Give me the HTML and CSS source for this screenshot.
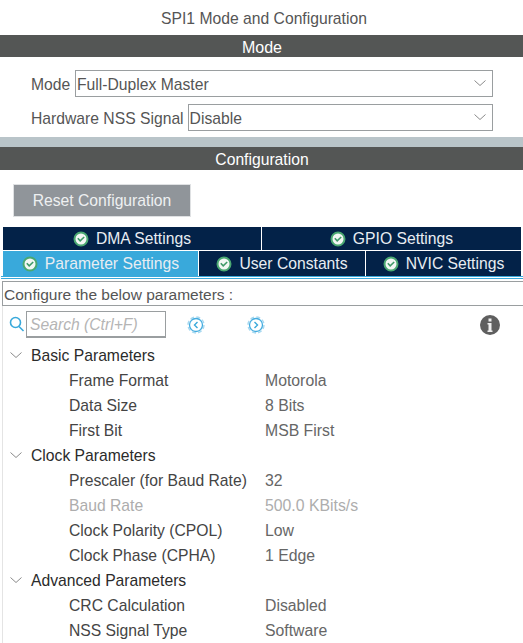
FILE: index.html
```html
<!DOCTYPE html>
<html lang="en">

<head>
    <title>SPI1 Mode and Configuration</title>

    <link rel="stylesheet" href="styles.css">
</head>

<body>
    <div class="page-title">SPI1 Mode and Configuration</div>

    <div class="band">Mode</div>
    <div class="mode-panel">
        <div class="mode-row">
            <label class="mode-label mode-label--short">Mode</label>
            <div class="select">
                <span>Full-Duplex Master</span>
                <svg class="select__arrow" width="12" height="7" viewBox="0 0 12 7"><path d="M0.5 0.5 L6 5.5 L11.5 0.5" /></svg>
            </div>
        </div>
        <div class="mode-row">
            <label class="mode-label">Hardware NSS Signal</label>
            <div class="select">
                <span>Disable</span>
                <svg class="select__arrow" width="12" height="7" viewBox="0 0 12 7"><path d="M0.5 0.5 L6 5.5 L11.5 0.5" /></svg>
            </div>
        </div>
    </div>
    <div class="divider"></div>

    <div class="band band--config">Configuration</div>
    <div class="reset-wrap">
        <button class="reset-button">Reset Configuration</button>
    </div>

    <div class="tabs">
        <div class="tabs__row">
            <div class="tab tab--dma">
                <svg class="check" width="16" height="16" viewBox="0 0 16 16"><circle cx="8" cy="8" r="6.5" /><path d="M4.8 7.2 L7.2 9.8 L11.2 6" /></svg>
                DMA Settings
            </div>
            <div class="tab tab--gpio">
                <svg class="check" width="16" height="16" viewBox="0 0 16 16"><circle cx="8" cy="8" r="6.5" /><path d="M4.8 7.2 L7.2 9.8 L11.2 6" /></svg>
                GPIO Settings
            </div>
        </div>
        <div class="tabs__row">
            <div class="tab tab--param tab--active">
                <svg class="check" width="16" height="16" viewBox="0 0 16 16"><circle cx="8" cy="8" r="6.5" /><path d="M4.8 7.2 L7.2 9.8 L11.2 6" /></svg>
                Parameter Settings
            </div>
            <div class="tab tab--user">
                <svg class="check" width="16" height="16" viewBox="0 0 16 16"><circle cx="8" cy="8" r="6.5" /><path d="M4.8 7.2 L7.2 9.8 L11.2 6" /></svg>
                User Constants
            </div>
            <div class="tab tab--nvic">
                <svg class="check" width="16" height="16" viewBox="0 0 16 16"><circle cx="8" cy="8" r="6.5" /><path d="M4.8 7.2 L7.2 9.8 L11.2 6" /></svg>
                NVIC Settings
            </div>
        </div>
    </div>
    <div class="tabs-line"></div>

    <div class="params">
        <div class="params__caption">Configure the below parameters :</div>

        <div class="search-row">
            <svg class="search-icon" width="16" height="17" viewBox="0 0 16 17"><circle cx="6.5" cy="6.5" r="5" /><path d="M10 10.5 L14.5 15" /></svg>
            <div class="search-box">Search (Ctrl+F)</div>
            <svg class="nav-icon nav-icon--prev" width="18" height="18" viewBox="0 0 18 18"><circle class="nav-icon__halo" cx="9" cy="9" r="8" /><circle cx="9" cy="9" r="6.5" /><path class="nav-icon__arrow" d="M10.5 6 L7.5 9 L10.5 12" /></svg>
            <svg class="nav-icon nav-icon--next" width="18" height="18" viewBox="0 0 18 18"><circle class="nav-icon__halo" cx="9" cy="9" r="8" /><circle cx="9" cy="9" r="6.5" /><path class="nav-icon__arrow" d="M7.5 6 L10.5 9 L7.5 12" /></svg>
            <svg class="info-icon" width="20" height="20" viewBox="0 0 20 20"><circle cx="10" cy="10" r="10" /><rect x="8.5" y="3.5" width="3" height="3" /><path d="M7.5 8 H11.5 V15.5 H12.5 V17 H7.5 V15.5 H8.5 V9.5 H7.5 Z" /></svg>
        </div>

        <div class="tree">
            <div class="tree__group">
                <svg class="tree__arrow" width="12" height="7" viewBox="0 0 12 7"><path d="M0.5 0.5 L6 5.5 L11.5 0.5" /></svg>
                Basic Parameters
            </div>
            <div class="tree__row"><span class="tree__name">Frame Format</span><span class="tree__value">Motorola</span></div>
            <div class="tree__row"><span class="tree__name">Data Size</span><span class="tree__value">8 Bits</span></div>
            <div class="tree__row"><span class="tree__name">First Bit</span><span class="tree__value">MSB First</span></div>

            <div class="tree__group">
                <svg class="tree__arrow" width="12" height="7" viewBox="0 0 12 7"><path d="M0.5 0.5 L6 5.5 L11.5 0.5" /></svg>
                Clock Parameters
            </div>
            <div class="tree__row"><span class="tree__name">Prescaler (for Baud Rate)</span><span class="tree__value">32</span></div>
            <div class="tree__row tree__row--disabled"><span class="tree__name">Baud Rate</span><span class="tree__value">500.0 KBits/s</span></div>
            <div class="tree__row"><span class="tree__name">Clock Polarity (CPOL)</span><span class="tree__value">Low</span></div>
            <div class="tree__row"><span class="tree__name">Clock Phase (CPHA)</span><span class="tree__value">1 Edge</span></div>

            <div class="tree__group">
                <svg class="tree__arrow" width="12" height="7" viewBox="0 0 12 7"><path d="M0.5 0.5 L6 5.5 L11.5 0.5" /></svg>
                Advanced Parameters
            </div>
            <div class="tree__row"><span class="tree__name">CRC Calculation</span><span class="tree__value">Disabled</span></div>
            <div class="tree__row"><span class="tree__name">NSS Signal Type</span><span class="tree__value">Software</span></div>
        </div>
    </div>
</body>

</html>
```

FILE: styles.css
```css
* {
    padding: 0;
    margin: 0;
    box-sizing: border-box;
}

html,
body {
    height: 643px;
    overflow: hidden;
}

body {
    background: white;
    color: #555;
    font-family: "Liberation Sans", Arial, sans-serif;
    font-size: 15.7px;
}

.page-title {
    height: 35px;
    line-height: 37px;
    text-align: center;
    padding-left: 5px;
}

.band {
    height: 22px;
    line-height: 25px;
    background: #545655;
    color: white;
    text-align: center;
    padding-left: 1px;
    font-size: 16px;
}

.band--config {
    height: 23px;
    font-size: 15.7px;
}

.mode-panel {
    display: flex;
    flex-direction: column;
    gap: 7px;
    height: 80px;
    padding: 13px 30px 0 31px;
}

.mode-row {
    display: flex;
    align-items: center;
    gap: 4px;
    height: 27px;
}

.mode-label {
    white-space: nowrap;
    padding-top: 2px;
}

.mode-label--short {
    width: 40px;
}

.select {
    flex: 1;
    height: 27px;
    display: flex;
    align-items: center;
    justify-content: space-between;
    padding: 0 6px 0 1px;
    border: 1px solid #9a9ea0;
}

.select span {
    padding-top: 2px;
}

.select__arrow path,
.tree__arrow path {
    fill: none;
    stroke: #8a8a8a;
    stroke-width: 1;
}

.divider {
    height: 10px;
    background: #b9c4c9;
}

.reset-wrap {
    padding: 14px 0 0 13px;
    height: 57px;
}

.reset-button {
    display: block;
    width: 178px;
    height: 33px;
    background: #90959a;
    border: 1px solid #dfe1e3;
    color: #eef0f1;
    font-family: inherit;
    font-size: 15.7px;
}

.tabs {
    margin: 0 2px 0 3px;
    display: flex;
    flex-direction: column;
    gap: 1px;
}

.tabs__row {
    display: flex;
    height: 23px;
    gap: 1px;
    background: white;
}

.tabs__row + .tabs__row {
    height: 25px;
}

.tab {
    display: flex;
    align-items: center;
    justify-content: center;
    gap: 7px;
    background: #032248;
    color: #e8edf2;
}

.tab--dma {
    width: 258px;
}

.tab--gpio {
    flex: 1;
}

.tab--param {
    width: 195px;
}

.tab--user {
    width: 166px;
}

.tab--nvic {
    flex: 1;
}

.tab--active {
    background: #39a9db;
}

.check circle {
    fill: #f2f7f4;
    stroke: #4aa872;
    stroke-width: 2;
}

.check path {
    fill: none;
    stroke: #3f9a68;
    stroke-width: 1.6;
}

.tabs-line {
    margin-left: 1px;
    height: 3px;
    border-top: 1px solid #39a9db;
    border-bottom: 1px solid #39a9db;
}

.params {
    margin-left: 2px;
    border-left: 1px solid #e4e4e4;
}

.params__caption {
    height: 25px;
    line-height: 26px;
    padding-left: 1px;
    border: 1px solid #9a9ea0;
    border-right: none;
    margin-left: -1px;
    margin-top: 2px;
    font-size: 15.5px;
}

.search-row {
    display: flex;
    align-items: center;
    height: 37px;
    padding-left: 6px;
}

.search-box {
    width: 140px;
    height: 27px;
    line-height: 26px;
    padding-left: 3px;
    margin-left: 1px;
    border: 1px solid #9a9ea0;
    border-bottom-width: 2px;
    color: #b5b5b5;
    font-style: italic;
}

.nav-icon circle {
    fill: none;
    stroke: #45ade0;
    stroke-width: 1.3;
}

.nav-icon .nav-icon__halo {
    stroke: #a9d9f0;
    stroke-width: 1.4;
    stroke-dasharray: 4 2.3;
}

.nav-icon__arrow {
    fill: none;
    stroke: #39a9db;
    stroke-width: 1.4;
}

.nav-icon--prev {
    margin-left: 21px;
}

.nav-icon--next {
    margin-left: 42px;
}

.info-icon {
    margin-left: 215px;
}

.info-icon circle {
    fill: #5f5f5f;
}

.info-icon rect,
.info-icon path {
    fill: #eeeeee;
}

.search-icon circle,
.search-icon path {
    fill: none;
    stroke: #39a9db;
    stroke-width: 1.6;
}

.tree__group {
    display: flex;
    align-items: center;
    height: 25px;
    padding-left: 7px;
    gap: 9px;
    color: #2b2b2b;
}

.tree__row {
    display: flex;
    align-items: center;
    height: 25px;
    padding-left: 66px;
}

.tree__name {
    width: 196px;
    color: #444;
}

.tree__value {
    color: #666;
    font-size: 15.8px;
}

.tree__row--disabled .tree__name,
.tree__row--disabled .tree__value {
    color: #adadad;
}
```
